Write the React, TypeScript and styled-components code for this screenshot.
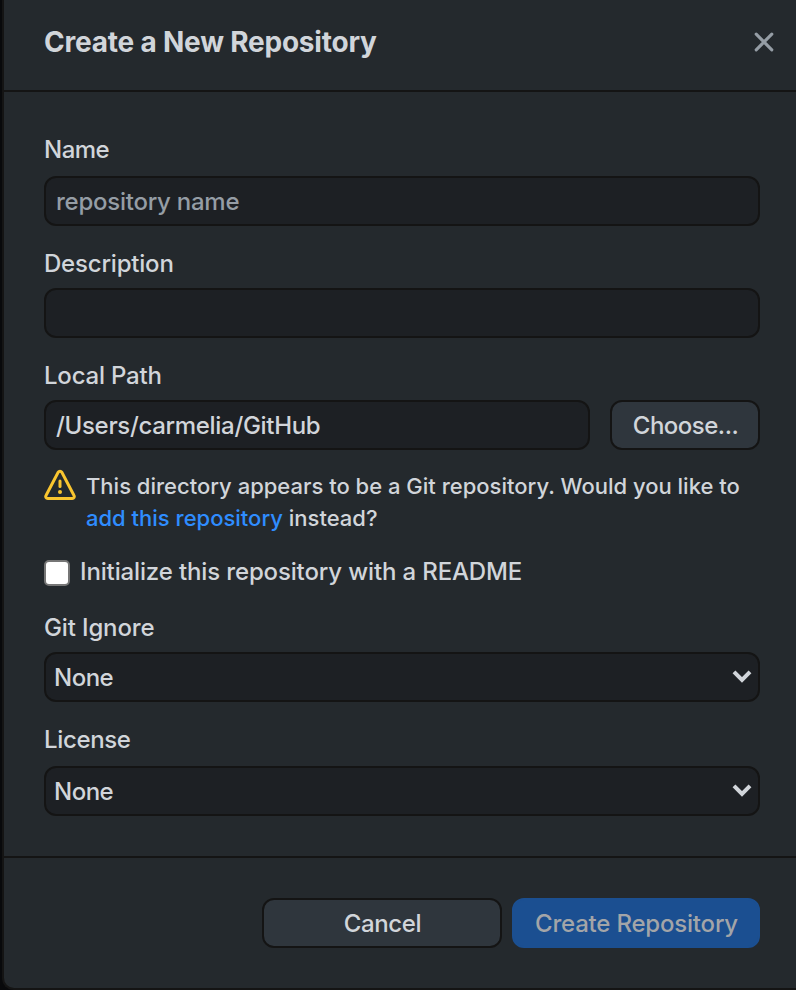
import React from 'react';
import styled, { createGlobalStyle } from 'styled-components';

const GlobalStyle = createGlobalStyle`
  *, *::before, *::after { box-sizing: border-box; }
  body { margin: 0; background: #08090b; }
  body, input, button, select { font-family: Inter, 'Liberation Sans', sans-serif; font-weight: 450; }
`;

const Viewport = styled.div`
  height: 990px;
  padding-left: 2px;
  overflow: hidden;
  background: #08090b;
`;

const Dialog = styled.section`
  display: flex;
  flex-direction: column;
  width: 100%;
  height: 990px;
  border: solid #141414;
  border-width: 0 0 2px 2px;
  border-bottom-left-radius: 12px;
  background: #24292d;
  color: #d1d5da;
  font-size: 24px;
  overflow: hidden;
`;

const Header = styled.header`
  display: flex;
  justify-content: space-between;
  align-items: center;
  height: 92px;
  padding: 0 22px 7px 40px;
  border-bottom: 2px solid #141414;
`;

const Title = styled.h1`
  margin: 1px 0 0;
  font-size: 28px;
  line-height: 34px;
  font-weight: 700;
  letter-spacing: -0.21px;
  white-space: nowrap;
`;

const CloseButton = styled.button`
  display: flex;
  padding: 0;
  border: 0;
  background: none;
  color: #959da5;
`;

const Content = styled.main`
  display: flex;
  flex-direction: column;
  height: 764px;
  padding: 40px 36px 0 40px;
`;

const Field = styled.div<{ $height: number }>`
  display: flex;
  flex-direction: column;
  justify-content: space-between;
  height: ${(p) => p.$height}px;
  margin-bottom: 20px;
`;

const Label = styled.label<{ $tracking?: number }>`
  line-height: 36px;
  white-space: nowrap;
  letter-spacing: ${(p) => p.$tracking ?? -0.14}px;
`;

const TextInput = styled.input<{ $tracking?: number }>`
  flex: 1;
  min-width: 0;
  width: 100%;
  max-height: 50px;
  min-height: 50px;
  padding: 0 10px;
  border: 2px solid #141414;
  border-radius: 12px;
  outline: 0;
  background: #1d2024;
  color: #d1d5da;
  font-size: 24px;
  letter-spacing: ${(p) => p.$tracking ?? -0.25}px;
  &::placeholder { color: #959da5; opacity: 1; }
`;

const PathRow = styled.div`
  display: flex;
  gap: 20px;
`;

const Button = styled.button<{ $width: number; $primary?: boolean; $tracking?: number }>`
  flex: none;
  width: ${(p) => p.$width}px;
  height: 50px;
  padding: 0 0 0 1px;
  border: 2px solid ${(p) => (p.$primary ? '#1b4f91' : '#141414')};
  border-radius: 12px;
  background: ${(p) => (p.$primary ? '#1b4f91' : '#2f363d')};
  color: ${(p) => (p.$primary ? '#a3a5a8' : '#d1d5da')};
  font-size: 24px;
  letter-spacing: ${(p) => p.$tracking ?? -0.2}px;
  white-space: nowrap;
`;

const Warning = styled.div`
  display: flex;
  gap: 10px;
  height: 64px;
  margin-bottom: 20px;
`;

const WarningIcon = styled.svg`
  flex: none;
  margin-top: -1px;
`;

const WarningText = styled.p`
  margin: 0;
  font-size: 22px;
  line-height: 32px;
  white-space: nowrap;
`;

const Link = styled.a`
  color: #2f8dff;
  text-decoration: none;
`;

const CheckRow = styled.div`
  display: flex;
  align-items: center;
  gap: 10px;
  height: 36px;
  margin-bottom: 20px;
`;

const Checkbox = styled.input`
  appearance: none;
  flex: none;
  width: 26px;
  height: 26px;
  margin: 2px 0 0;
  border: 2px solid #767676;
  border-radius: 5px;
  background: #fff;
`;

const SelectFrame = styled.div`
  position: relative;
  height: 50px;
`;

const Select = styled.select`
  appearance: none;
  width: 100%;
  height: 50px;
  padding: 0 8px;
  border: 2px solid #141414;
  border-radius: 12px;
  background: #1d2024;
  color: #d1d5da;
  font-size: 24px;
  letter-spacing: -0.5px;
`;

const Chevron = styled.svg`
  position: absolute;
  right: 8px;
  top: 17px;
  pointer-events: none;
`;

const Footer = styled.footer`
  display: flex;
  justify-content: flex-end;
  gap: 10px;
  flex: 1;
  padding: 40px 36px 0;
  border-top: 2px solid #141414;
`;

function SelectBox({ id }: { id: string }) {
  return (
    <SelectFrame>
      <Select id={id} defaultValue="None">
        <option>None</option>
      </Select>
      <Chevron width="20" height="14" viewBox="0 0 20 14" fill="none">
        <path d="M2 2.8 10 10.8 18 2.8" stroke="#d1d5da" strokeWidth="4" />
      </Chevron>
    </SelectFrame>
  );
}

export default function App() {
  return (
    <Viewport>
      <GlobalStyle />
      <Dialog>
        <Header>
          <Title>Create a New Repository</Title>
          <CloseButton aria-label="Close">
            <svg width="20" height="20" viewBox="0 0 20 20" fill="none">
              <path d="M2.2 2.2 17.8 17.8M17.8 2.2 2.2 17.8" stroke="currentColor" strokeWidth="3.1" strokeLinecap="round" />
            </svg>
          </CloseButton>
        </Header>
        <Content>
          <Field $height={94}>
            <Label htmlFor="name" $tracking={-0.5}>Name</Label>
            <TextInput id="name" placeholder="repository name" />
          </Field>
          <Field $height={92}>
            <Label htmlFor="description" $tracking={-0.2}>Description</Label>
            <TextInput id="description" />
          </Field>
          <Field $height={92}>
            <Label htmlFor="path" $tracking={-0.2}>Local Path</Label>
            <PathRow>
              <TextInput id="path" defaultValue="/Users/carmelia/GitHub" $tracking={-0.32} />
              <Button $width={150} $tracking={-0.5}>Choose...</Button>
            </PathRow>
          </Field>
          <Warning>
            <WarningIcon width="32" height="32" viewBox="0 0 32 32" fill="none" stroke="#f9c52f">
              <path d="M14.3 3.1a2 2 0 0 1 3.4 0L30 26.5a2 2 0 0 1-1.7 3H3.7a2 2 0 0 1-1.7-3Z" strokeWidth="3" />
              <path d="M16 12v5.5" strokeWidth="3" strokeLinecap="round" />
              <circle cx="16" cy="23" r="2" fill="#f9c52f" stroke="none" />
            </WarningIcon>
            <WarningText>
              This directory appears to be a Git repository. Would you like to
              <br />
              <Link>add this repository</Link> instead?
            </WarningText>
          </Warning>
          <CheckRow>
            <Checkbox type="checkbox" id="readme" />
            <Label htmlFor="readme">Initialize this repository with a README</Label>
          </CheckRow>
          <Field $height={92}>
            <Label htmlFor="ignore">Git Ignore</Label>
            <SelectBox id="ignore" />
          </Field>
          <Field $height={94}>
            <Label htmlFor="license" $tracking={-0.35}>License</Label>
            <SelectBox id="license" />
          </Field>
        </Content>
        <Footer>
          <Button $width={240} $tracking={-0.35}>Cancel</Button>
          <Button $width={248} $primary disabled>Create Repository</Button>
        </Footer>
      </Dialog>
    </Viewport>
  );
}
